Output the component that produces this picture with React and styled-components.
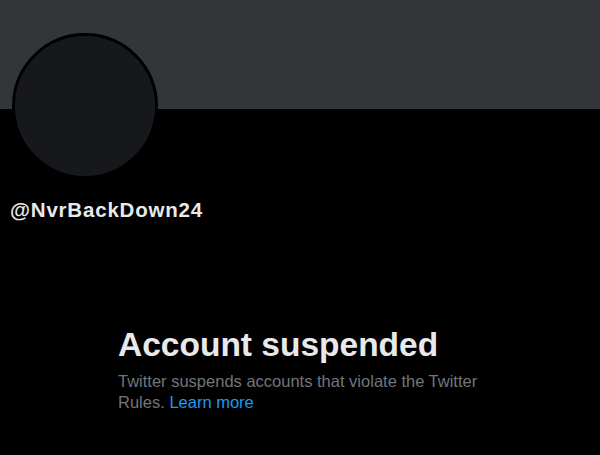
import React from 'react';
import styled, { createGlobalStyle } from 'styled-components';

const GlobalStyle = createGlobalStyle`
  html, body {
    margin: 0;
    padding: 0;
    background: #000;
  }
  body {
    font-family: "Liberation Sans", Arial, sans-serif;
  }
`;

const Page = styled.div`
  width: 600px;
  height: 455px;
  background: #000;
  overflow: hidden;
`;

const Banner = styled.div`
  height: 109px;
  background: #333639;
`;

const Header = styled.div`
  padding: 0 12px;
`;

const Avatar = styled.div`
  width: 146px;
  height: 146px;
  box-sizing: border-box;
  margin-top: -76px;
  border-radius: 50%;
  border: 3px solid #000;
  background: #16181c;
`;

const Handle = styled.div`
  margin: 19px 0 0 -2px;
  color: #e7e9ea;
  font-size: 20.5px;
  font-weight: 700;
  line-height: 24px;
  letter-spacing: 0.8px;
`;

const Notice = styled.div`
  margin: 103px 0 0 118px;
  width: 380px;
`;

const Title = styled.h1`
  margin: 0;
  color: #e7e9ea;
  font-size: 33.5px;
  font-weight: 700;
  line-height: 40px;
`;

const Body = styled.p`
  margin: 6px 0 0;
  color: #71767b;
  font-size: 16.5px;
  line-height: 21px;
`;

const Link = styled.a`
  color: #1d9bf0;
  text-decoration: none;
`;

export default function App() {
  return (
    <Page>
      <GlobalStyle />
      <Banner />
      <Header>
        <Avatar />
        <Handle>@NvrBackDown24</Handle>
      </Header>
      <Notice>
        <Title>Account suspended</Title>
        <Body>
          Twitter suspends accounts that violate the Twitter Rules.{' '}
          <Link href="#">Learn more</Link>
        </Body>
      </Notice>
    </Page>
  );
}
